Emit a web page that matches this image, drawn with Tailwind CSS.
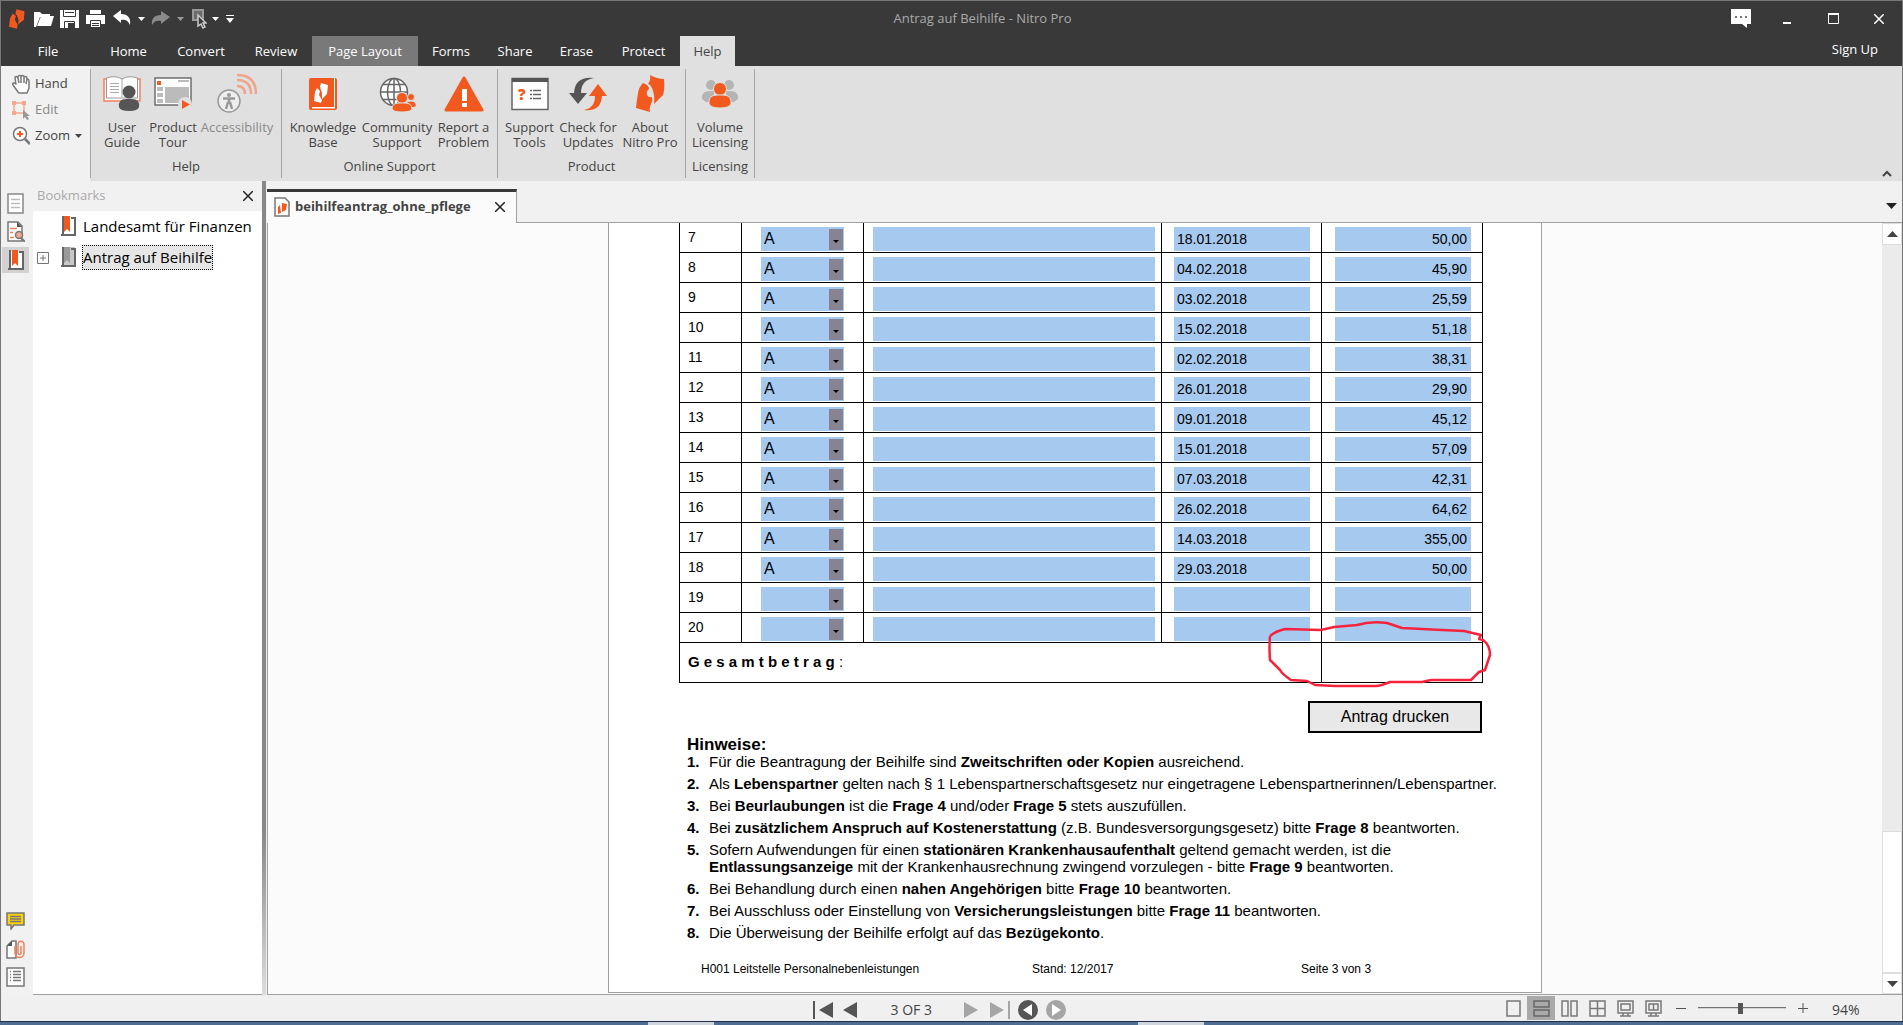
<!DOCTYPE html>
<html lang="de">
  <head>
    <meta charset="UTF-8" />
    <meta name="viewport" content="width=device-width, initial-scale=1.0" />
    <title>Antrag auf Beihilfe - Nitro Pro</title>
    <script src="https://cdn.jsdelivr.net/npm/@tailwindcss/browser@4"></script>
  </head>
  <body class="flex h-screen flex-col overflow-hidden bg-[#f0f0f0] font-['Open_Sans','Noto_Sans',sans-serif] text-[13px] text-[#444]">
    <div class="flex min-h-0 flex-1 flex-col border-t border-r border-l border-[#777]">
      <!-- Title bar -->
      <header class="bg-[#39393a] text-white">
        <div class="flex h-[35px] items-center">
          <div class="flex items-center pl-2">
            <svg class="mr-[9px] h-5 w-4" viewBox="5 2 30 37" fill="#f1591f"><path d="M19 2 34 6 33 22 22 31 23 22 20 14 17 11zM12 10 18 15 16 22 21 31 20 39 5 35 7 19z" /></svg>
            <button type="button" aria-label="Open" class="mr-[6px]">
              <svg class="h-5 w-5" viewBox="0 0 20 20" fill="#fff"><path d="M0 3h6l2 2h8v3H6L2 18H0zM7 7h13l-3 10H3z" /></svg>
            </button>
            <button type="button" aria-label="Save" class="mr-[7px]">
              <svg class="h-5 w-[19px]" viewBox="0 0 19 20"><path fill="#fff" d="M0 1h19v18H0z" /><path fill="none" stroke="#39393a" d="M3.500 1v6.500h12V1M5 3.500h9M4.500 19v-6.500h10V19" /><path fill="#39393a" d="M8 14h6v5H8z" /></svg>
            </button>
            <button type="button" aria-label="Print" class="mr-2">
              <svg class="h-5 w-[19px]" viewBox="0 0 19 20"><path fill="#fff" d="M4 1h11v4H4zM0 6h19v9H0z" /><path fill="#fff" stroke="#39393a" d="M4.500 11.500h10v7h-10z" /><path stroke="#39393a" d="M6 14.500h7M6 16.500h7" /></svg>
            </button>
            <button type="button" aria-label="Undo" class="mr-[7px]">
              <svg class="h-5 w-[18px]" viewBox="0 0 18 20" fill="#fff"><path d="M0 7 8 1v4c7 0 10 4 9 11-2-5-5-6-9-5v3z" /></svg>
            </button>
            <svg class="mr-[6px] h-1 w-[7px]" viewBox="0 0 7 4" fill="#fff"><path d="M0 0h7L3.500 4z" /></svg>
            <button type="button" aria-label="Redo" class="mr-[7px]">
              <svg class="h-5 w-[19px]" viewBox="0 0 19 20" fill="#8a8a8a"><path d="M19 8 10 2v4C3 6 0 10 1 16c2-4 5-5 9-4v3z" /></svg>
            </button>
            <svg class="mr-2 h-1 w-[7px]" viewBox="0 0 7 4" fill="#999"><path d="M0 0h7L3.500 4z" /></svg>
            <button type="button" aria-label="Select" class="mr-[5px]">
              <svg class="h-5 w-[15px]" viewBox="0 0 15 20"><path fill="#6b6b6b" stroke="#999" stroke-width="2" d="M1 1h10v10H1z" /><path fill="#39393a" stroke="#ccc" stroke-width="1.500" d="M6 6v11l3-2 2 4 2-1-2-4h3z" /></svg>
            </button>
            <svg class="mr-[7px] h-1 w-[7px]" viewBox="0 0 7 4" fill="#fff"><path d="M0 0h7L3.500 4z" /></svg>
            <svg class="h-2 w-2" viewBox="0 0 8 8" fill="#fff"><path d="M0 0h8v1H0zM0 3h8L4 8z" /></svg>
          </div>
          <h1 class="flex-1 text-center text-[#a9a9a9]">Antrag auf Beihilfe - Nitro Pro</h1>
          <div class="flex items-center pr-[18px]">
            <button type="button" aria-label="Feedback" class="mr-8">
              <svg class="h-5 w-5" viewBox="0 0 20 20"><path fill="#fff" d="M0 0h20v15h-4v4l-5-4H0z" /><path fill="#777" d="M4 7h2v2H4zM9 7h2v2H9zM14 7h2v2h-2z" /></svg>
            </button>
            <button type="button" aria-label="Minimize" class="mr-[37px]">
              <svg class="h-3 w-2" viewBox="0 0 8 12"><path fill="#fff" d="M0 9h8v2H0z" /></svg>
            </button>
            <button type="button" aria-label="Maximize" class="mr-[35px]">
              <svg class="h-[11px] w-[11px]" viewBox="0 0 11 11"><path fill="none" stroke="#fff" d="M.500 1h10v9.500H.500z" /><path fill="#fff" d="M0 0h11v2H0z" /></svg>
            </button>
            <button type="button" aria-label="Close">
              <svg class="h-[10px] w-[10px]" viewBox="0 0 10 10"><path stroke="#fff" stroke-width="1.500" d="m0 0 10 10M10 0 0 10" /></svg>
            </button>
          </div>
        </div>
        <nav class="flex h-[30px] items-stretch">
          <button type="button" class="w-[94px] pt-[2px]">File</button>
          <button type="button" class="w-[67px] pt-[2px]">Home</button>
          <button type="button" class="w-[78px] pt-[2px]">Convert</button>
          <button type="button" class="w-[72px] pt-[2px]">Review</button>
          <button type="button" class="w-[106px] bg-[#79797a] pt-[2px]">Page Layout</button>
          <button type="button" class="w-[66px] pt-[2px]">Forms</button>
          <button type="button" class="w-[62px] pt-[2px]">Share</button>
          <button type="button" class="w-[61px] pt-[2px]">Erase</button>
          <button type="button" class="w-[73px] pt-[2px]">Protect</button>
          <button type="button" class="w-[55px] bg-[#e0e0e0] pt-[2px] text-[#444]">Help</button>
          <a href="#" class="ml-auto pt-1 pr-6">Sign Up</a>
        </nav>
      </header>

      <!-- Ribbon -->
      <section class="flex h-[115px] bg-[#e0e0e0]">
        <div class="flex w-[89px] flex-col bg-[#f1f1f1] pt-[5px] pl-[11px]">
          <button type="button" class="flex h-[26px] items-center gap-[5px]">
            <svg class="h-5 w-[18px]" viewBox="0 0 18 20" fill="#fff" stroke="#777" stroke-width="1.500" stroke-linejoin="round"><path d="M6 18 1 11c-1-2 1-3 3-1L3 4c0-2 2-2 3 0V3c0-2 3-2 3-.500C10 1 12 1 12 3c2-1 3 0 3 2 2 0 2 1 2 3v6l-2 5H7zM6 4l1 5M9 3v6M12 3v6M15 5l-1 5" /></svg>
            Hand
          </button>
          <button type="button" class="flex h-[26px] items-center gap-[5px] text-[#888]">
            <svg class="h-5 w-[18px]" viewBox="0 0 18 20"><path fill="none" stroke="#f3a88e" stroke-width="1.500" d="M2 3h10v10H2z" /><path fill="#f3a88e" d="M0 1h4v4H0zM10 1h4v4h-4zM0 11h4v4H0z" /><path fill="#999" d="M11 10v9l2-2 2 3 2-1-2-3h3z" /></svg>
            Edit
          </button>
          <button type="button" class="flex h-[26px] items-center gap-[5px]">
            <svg class="h-5 w-[18px]" viewBox="0 0 18 20"><circle cx="8" cy="8" r="6.500" fill="#fff" stroke="#777" stroke-width="1.500" /><path stroke="#777" stroke-width="2.500" d="m13 13 5 5" /><path stroke="#f1591f" stroke-width="2" d="M8 5v6M5 8h6" /></svg>
            Zoom
            <svg class="h-1 w-[7px]" viewBox="0 0 7 4" fill="#444"><path d="M0 0h7L3.500 4z" /></svg>
          </button>
        </div>

        <div class="my-[3px] flex flex-col border-r border-l border-[#a5a5a5] px-[6px] pt-1 text-center leading-[15px]">
          <div class="flex h-[83px]">
            <button type="button" class="flex w-[50px] flex-col items-center">
              <svg class="mb-[7px] h-10 w-10 shrink-0" viewBox="0 0 40 40"><path fill="#fff" stroke="#f0835c" stroke-width="1.500" d="M2 6h36v22H2z" /><path fill="#fff" stroke="#999" d="M4.500 5q9-3 15.500 1 6.500-4 15.500-1v20H4.500z" /><path stroke="#aaa" d="M20 6v18M8 10.500h9M8 13.500h9M8 16.500h9M8 19.500h9" /><circle cx="27" cy="19" r="6.500" fill="#555" /><path fill="#555" d="M17 34q-1-8 7-8h6q8 0 7 8-1 4-10 4t-10-4" /></svg>
              User Guide
            </button>
            <button type="button" class="flex w-[52px] flex-col items-center">
              <svg class="mb-[7px] h-10 w-10 shrink-0" viewBox="0 0 40 40"><path fill="#fff" stroke="#6d6d6d" stroke-width="1.500" d="M2 5h36v27H2z" /><path fill="#f1591f" d="M4 8h4v4H4z" /><path stroke="#bbb" stroke-width="2" d="M25 8h11" /><path fill="#bbb" d="M4 14h6v4H4zM4 20h6v4H4zM4 26h6v4H4zM12 14h24v16H12z" /><circle cx="32" cy="31" r="7" fill="#e0e0e0" /><path fill="#f1591f" d="m29 27 8 4.500-8 4.500z" /></svg>
              Product Tour
            </button>
            <button type="button" class="flex w-[76px] flex-col items-center text-[#8b8b8b]">
              <svg class="mb-[7px] h-10 w-10 shrink-0" viewBox="0 0 40 40" fill="none"><circle cx="12" cy="28" r="11" fill="#eee" stroke="#999" stroke-width="1.500" /><circle cx="12" cy="22" r="2" fill="#999" /><path stroke="#999" stroke-width="2.500" d="M6 25.500h12M12 25v6M11 29l-2 7M13 29l2 7" /><path stroke="#efa58b" stroke-width="2.500" d="M20 13q8 0 8 8M20 7q14 0 14 14M20 2q19 0 19 19" /></svg>
              Accessibility
            </button>
          </div>
          <span class="mt-[3px]">Help</span>
        </div>

        <div class="my-[3px] flex flex-col border-r border-[#a5a5a5] px-[5px] pt-1 text-center leading-[15px]">
          <div class="flex h-[83px]">
            <button type="button" class="flex w-[72px] flex-col items-center">
              <svg class="mb-[7px] h-10 w-10 shrink-0" viewBox="0 0 40 40"><rect x="6" y="5" width="28" height="32" rx="2" fill="#f1591f" /><path fill="#fff" d="M31 5h1v29h-1zM9 34h23v1.500H9z" /><path fill="#fff" d="m18 10 7 2-1 9-5 5 0-6-2-6zM14 15l3 3-1 4 3 5-1 3-7-2 1-9z" /></svg>
              Knowledge Base
            </button>
            <button type="button" class="flex w-[76px] flex-col items-center">
              <svg class="mb-[7px] h-10 w-10 shrink-0" viewBox="0 0 40 40"><g fill="#fff" stroke="#666" stroke-width="1.500"><circle cx="17" cy="19" r="13.500" /><ellipse cx="17" cy="19" rx="6.500" ry="13.500" /><path d="M17 5.500v27M3.500 19h27M6 11.500h22M6 26.500h22" /></g><g fill="#f1591f" stroke="#e0e0e0"><circle cx="34" cy="24" r="3.500" /><path d="M29 32q0-4 5-4 6 0 5 6l-7 1z" /><circle cx="25" cy="25" r="5.500" /><path d="M15 36q0-6 7-6h6q7 0 7 6-1 3-10 3t-10-3" /></g></svg>
              Community Support
            </button>
            <button type="button" class="flex w-[57px] flex-col items-center">
              <svg class="mb-[7px] h-10 w-10 shrink-0" viewBox="0 0 40 40"><path fill="#f1591f" stroke="#f1591f" stroke-width="3" stroke-linejoin="round" d="M20 5 38 37H2z" /><path fill="#fff" d="M18 16h5v12h-5zM18 30h5v4h-5z" /></svg>
              <span class="whitespace-nowrap">Report a<br />Problem</span>
            </button>
          </div>
          <span class="mt-[3px]">Online Support</span>
        </div>

        <div class="my-[3px] flex flex-col border-r border-[#a5a5a5] px-[6px] pt-1 text-center leading-[15px]">
          <div class="flex h-[83px]">
            <button type="button" class="flex w-[51px] flex-col items-center">
              <svg class="mb-[7px] h-10 w-10 shrink-0" viewBox="0 0 40 40"><path fill="#fff" stroke="#666" stroke-width="1.500" d="M2 5.500h36v31H2z" /><path fill="#555" d="M2 5h36v4H2z" /><text x="8" y="27" fill="#f1591f" font-size="15" font-weight="800">?</text><path stroke="#666" stroke-width="1.500" d="M20 17.500h2M20 21.500h2M20 25.500h2M23 17.500h8M23 21.500h8M23 25.500h8" /></svg>
              Support Tools
            </button>
            <button type="button" class="flex w-[66px] flex-col items-center">
              <svg class="mb-[7px] h-10 w-10 shrink-0" viewBox="0 0 40 40"><path fill="#555" d="M26 5Q7 3 6 20H1l9 11 9-11h-6Q13 7 26 5" /><path fill="#f1591f" d="M16 37q17 2 18-14h5L30 11l-9 12h6q0 12-11 14" /></svg>
              Check for Updates
            </button>
            <button type="button" class="flex w-[58px] flex-col items-center">
              <svg class="mb-[7px] h-10 w-10 shrink-0" viewBox="0 0 40 40" fill="#f1591f"><path d="M20 2Q27 6 34 6 35 16 33 22L24 31Q25 22 22 15 20 11 18 11 21 7 20 2M13 10Q19 12 19 16 16 18 17 22 19 25 22 24 23 28 21 31 19 36 20 39L6 35Q7 26 8 20 9 14 13 10" /></svg>
              <span class="whitespace-nowrap">About<br />Nitro Pro</span>
            </button>
          </div>
          <span class="mt-[3px]">Product</span>
        </div>

        <div class="my-[3px] flex flex-col border-r border-[#a5a5a5] px-[5px] pt-1 text-center leading-[15px]">
          <div class="flex h-[83px]">
            <button type="button" class="flex w-[58px] flex-col items-center">
              <svg class="mb-[7px] h-10 w-10 shrink-0" viewBox="0 0 40 40"><g fill="#b5b5b5"><circle cx="11" cy="12" r="5" /><circle cx="29" cy="12" r="5" /><path d="M2 26q-1-8 8-8h4v11H6zM38 26q1-8-8-8h-4v11h8z" /></g><g fill="#f1591f" stroke="#e0e0e0"><circle cx="20" cy="16" r="6.500" /><path d="M9 31q-1-9 8-9h6q9 0 8 9-2 4-11 4T9 31" /></g></svg>
              Volume Licensing
            </button>
          </div>
          <span class="mt-[3px]">Licensing</span>
        </div>
        <button type="button" aria-label="Collapse ribbon" class="mt-auto mr-[10px] mb-1 ml-auto">
          <svg class="h-[7px] w-[10px]" viewBox="0 0 10 7"><path fill="none" stroke="#444" stroke-width="2" d="m1 6 4-4 4 4" /></svg>
        </button>
      </section>

      <main class="flex min-h-0 flex-1">
        <!-- Panel switcher -->
        <nav class="flex w-8 flex-col bg-[#f1f1f1] pt-[10px] pl-px">
          <button type="button" aria-label="Pages" class="flex h-7 w-[27px] justify-center pt-[2px]">
            <svg class="h-[21px] w-[17px]" viewBox="0 0 17 21"><path fill="#fff" stroke="#888" stroke-width="1.500" d="M1 1h15v19H1z" /><path stroke="#bbb" stroke-width="1.500" d="M4 6.500h9M4 10.500h9M4 14.500h9" /></svg>
          </button>
          <button type="button" aria-label="Search" class="flex h-7 w-[27px] justify-center pt-[2px]">
            <svg class="h-[21px] w-[18px]" viewBox="0 0 18 21"><path fill="#fff" stroke="#777" stroke-width="1.500" d="M1 1h10l4 4v15H1z" /><path fill="#555" d="M10 1v5h5z" /><path stroke="#f0835c" stroke-width="1.500" d="M3 7.500h7M3 11.500h3M3 16.500h4" /><circle cx="12" cy="14" r="3.500" fill="#f3a88e" stroke="#777" stroke-width="1.500" /><path stroke="#777" stroke-width="2" d="m14 17 4 4" /></svg>
          </button>
          <button type="button" aria-label="Bookmarks" class="flex h-[26px] w-[27px] items-center justify-center bg-[#d2d2d2]">
            <svg class="h-[21px] w-4" viewBox="0 0 16 21"><path fill="#fff" d="M1 1h14v19H1z" /><path fill="#f1591f" d="M4 0h6v16l-3-3-3 3z" /><path fill="none" stroke="#666" stroke-width="2" d="M2 0v20M0 19h15V2h-4" /></svg>
          </button>
          <button type="button" aria-label="Comments" class="mt-auto h-7 w-[27px] pl-1">
            <svg class="h-[18px] w-[19px]" viewBox="0 0 19 18"><path fill="#fbd20c" stroke="#777" stroke-width="1.500" d="M1 1h17v12H8l-3 4v-4H1z" /><path stroke="#777" stroke-width="1.500" d="M4 4.500h11M4 7h11M4 9.500h11" /></svg>
          </button>
          <button type="button" aria-label="Attachments" class="h-7 w-[27px] pl-1">
            <svg class="h-[19px] w-[19px]" viewBox="0 0 19 19" fill="none"><path fill="#fff" stroke="#777" stroke-width="1.500" d="M1 6 6 1h4v17H1z" /><path fill="#555" d="M1 6 6 1v5z" /><path stroke="#f0835c" stroke-width="1.500" d="M9 6v7c0 6 9 6 9 0V5c0-5-6-5-6 0v8c0 2 3 2 3 0V6" /></svg>
          </button>
          <button type="button" aria-label="Output" class="mt-1 mb-2 h-5 w-[27px] pl-1">
            <svg class="h-5 w-[19px]" viewBox="0 0 19 20"><path fill="#fff" stroke="#777" stroke-width="1.500" d="M1 1h17v18H1z" /><path stroke="#777" d="M4 4.500h1M4 7.500h1M4 10.500h1M4 13.500h1M7 4.500h8M7 7.500h8M7 10.500h8M7 13.500h8" stroke-width="1.500" /></svg>
          </button>
        </nav>

        <!-- Bookmarks panel -->
        <aside class="flex w-[229px] flex-col border-b border-[#a0a0a0] bg-white">
          <div class="flex h-[30px] items-center justify-between bg-[#f1f1f1] pr-[9px] pl-1">
            <h2 class="text-[#a9a9a9]">Bookmarks</h2>
            <button type="button" aria-label="Close panel">
              <svg class="h-[10px] w-[10px]" viewBox="0 0 10 10"><path stroke="#222" stroke-width="1.500" d="m0 0 10 10M10 0 0 10" /></svg>
            </button>
          </div>
          <ul class="text-[15px] text-black">
            <li class="flex h-[31px] items-center pl-7">
              <svg class="mr-[5px] h-[21px] w-4" viewBox="0 0 16 21"><path fill="#f1591f" d="M3 0h6v16l-3-3-3 3z" /><path fill="none" stroke="#666" stroke-width="2" d="M2 0v20M0 19h14V2h-4" /></svg>
              <a href="#" class="px-px">Landesamt für Finanzen</a>
            </li>
            <li class="flex h-[31px] items-center pl-1">
              <button type="button" aria-label="Expand" class="mr-3">
                <svg class="h-3 w-3" viewBox="0 0 12 12"><path fill="#fff" stroke="#777" d="M.500.500h11v11H.500zM3 6h6M6 3v6" /></svg>
              </button>
              <svg class="mr-[5px] h-[21px] w-4" viewBox="0 0 16 21"><path fill="#c8c8c8" d="M1 0h13v20H1z" /><path fill="#999" d="M3 0h6v16l-3-3-3 3z" /><path fill="none" stroke="#666" stroke-width="2" d="M2 0v20M0 19h14V2h-4" /></svg>
              <a href="#" class="h-[25px] border border-dotted border-black bg-[#e6e6e6] leading-[23px]">Antrag auf Beihilfe</a>
            </li>
          </ul>
        </aside>
        <div class="w-1 bg-linear-to-b from-[#888] from-80% to-[#ddd]"></div>

        <!-- Document -->
        <section class="flex min-w-0 flex-1 flex-col pl-px">
          <div class="flex h-[42px] items-end bg-[#f1f1f1]">
            <div class="flex h-[34px] w-[250px] items-center border-t-3 border-r border-t-[#39393a] border-r-[#a0a0a0] bg-[#fbfbfb] pb-[2px] pl-[7px]">
              <svg class="mr-[5px] h-5 w-4 shrink-0" viewBox="0 0 16 20"><path fill="#fff" stroke="#777" stroke-width="1.500" d="M1 1h10l4 4v14H1z" /><path fill="#f1591f" d="m8 6 5 1-1 6-4 2zM6 8l1 8-3 1 0-7z" /></svg>
              <span class="font-bold">beihilfeantrag_ohne_pflege</span>
              <button type="button" aria-label="Close tab" class="mr-[11px] ml-auto">
                <svg class="h-[10px] w-[10px]" viewBox="0 0 10 10"><path stroke="#222" stroke-width="1.500" d="m0 0 10 10M10 0 0 10" /></svg>
              </button>
            </div>
            <div class="flex h-[34px] flex-1 items-center justify-end border-b border-[#a0a0a0] pr-[5px]">
              <button type="button" aria-label="Tab list">
                <svg class="h-[6px] w-[11px]" viewBox="0 0 11 6" fill="#222"><path d="M0 0h11L5.500 6z" /></svg>
              </button>
            </div>
          </div>

          <div class="flex min-h-0 flex-1 border-b border-l border-[#a0a0a0] bg-[#fbfbfb]">
            <div class="flex min-w-0 flex-1 justify-center overflow-hidden pb-px">
              <article class="w-[934px] shrink-0 border-r border-b border-l border-[#a0a0a0] bg-white px-[70px] font-['Liberation_Sans',Arial,sans-serif] text-black">
                <div class="relative w-[804px]">
                  <table class="w-full table-fixed border-separate border-spacing-0 border-l border-black text-[14px]">
                    <colgroup>
                      <col class="w-[62px]" />
                      <col class="w-[122px]" />
                      <col class="w-[298px]" />
                      <col class="w-[160px]" />
                      <col class="w-[161px]" />
                    </colgroup>
                    <tbody id="rows"></tbody>
                    <tfoot>
                      <tr>
                        <th colspan="4" scope="row" class="h-10 border-r border-b border-black pl-2 text-left text-[15px] font-bold">G e s a m t b e t r a g <span class="font-normal">:</span></th>
                        <td class="border-r border-b border-black"></td>
                      </tr>
                    </tfoot>
                  </table>
                  <!-- Freehand mark round the total -->
                  <svg class="absolute -right-[11px] -bottom-[6px] h-[70px] w-[228px]" viewBox="1266 619 228 70" fill="none" stroke="#f5243c" stroke-width="2.500" stroke-linejoin="round"><path d="M1270 636Q1276 631 1285 629L1321 630 1334 627 1357 625Q1370 621 1387 623L1402 628 1442 630 1464 631 1481 635 1479 639 1483 640Q1490 645 1490 655L1485 670 1479 672 1471 680 1431 680 1422 682 1390 682Q1380 686 1376 686L1335 686 1315 685 1307 681 1291 680Q1282 674 1280 670L1270 660Q1269 648 1270 636" /></svg>
                </div>
                <div class="mt-[18px] flex w-[803px] justify-end">
                  <button type="button" class="h-8 w-[174px] border-2 border-black bg-[#e8e8e8] text-[16px]">Antrag drucken</button>
                </div>
                <h2 class="mt-[3px] pl-2 text-[17px] leading-[17px] font-bold">Hinweise:</h2>
                <ol class="flex flex-col gap-[5px] pl-2 text-[15px] leading-[17px] whitespace-nowrap">
                  <li class="flex"><b class="w-[22px] shrink-0">1.</b><p>Für die Beantragung der Beihilfe sind <b>Zweitschriften oder Kopien</b> ausreichend.</p></li>
                  <li class="flex"><b class="w-[22px] shrink-0">2.</b><p>Als <b>Lebenspartner</b> gelten nach § 1 Lebenspartnerschaftsgesetz nur eingetragene Lebenspartnerinnen/Lebenspartner.</p></li>
                  <li class="flex"><b class="w-[22px] shrink-0">3.</b><p>Bei <b>Beurlaubungen</b> ist die <b>Frage 4</b> und/oder <b>Frage 5</b> stets auszufüllen.</p></li>
                  <li class="flex"><b class="w-[22px] shrink-0">4.</b><p>Bei <b>zusätzlichem Anspruch auf Kostenerstattung</b> (z.B. Bundesversorgungsgesetz) bitte <b>Frage 8</b> beantworten.</p></li>
                  <li class="flex"><b class="w-[22px] shrink-0">5.</b><p>Sofern Aufwendungen für einen <b>stationären Krankenhausaufenthalt</b> geltend gemacht werden, ist die<br /><b>Entlassungsanzeige</b> mit der Krankenhausrechnung zwingend vorzulegen - bitte <b>Frage 9</b> beantworten.</p></li>
                  <li class="flex"><b class="w-[22px] shrink-0">6.</b><p>Bei Behandlung durch einen <b>nahen Angehörigen</b> bitte <b>Frage 10</b> beantworten.</p></li>
                  <li class="flex"><b class="w-[22px] shrink-0">7.</b><p>Bei Ausschluss oder Einstellung von <b>Versicherungsleistungen</b> bitte <b>Frage 11</b> beantworten.</p></li>
                  <li class="flex"><b class="w-[22px] shrink-0">8.</b><p>Die Überweisung der Beihilfe erfolgt auf das <b>Bezügekonto</b>.</p></li>
                </ol>
                <footer class="mt-5 flex pl-[22px] text-[12px] leading-4">
                  <span class="w-[331px]">H001 Leitstelle Personalnebenleistungen</span>
                  <span class="w-[269px]">Stand: 12/2017</span>
                  <span>Seite 3 von 3</span>
                </footer>
              </article>
            </div>
            <!-- Scrollbar -->
            <div class="flex w-5 flex-col bg-[#ebebeb]">
              <button type="button" aria-label="Scroll up" class="flex h-[22px] items-center justify-center border border-[#ddd] bg-white">
                <svg class="h-[6px] w-[11px]" viewBox="0 0 11 6" fill="#444"><path d="M0 6h11L5.500 0z" /></svg>
              </button>
              <div class="mt-auto h-[142px] border border-[#ddd] bg-white"></div>
              <button type="button" aria-label="Scroll down" class="flex h-[21px] items-center justify-center border border-[#ddd] bg-white">
                <svg class="h-[6px] w-[11px]" viewBox="0 0 11 6" fill="#444"><path d="M0 0h11L5.500 6z" /></svg>
              </button>
            </div>
          </div>
        </section>
      </main>

      <!-- Status bar -->
      <footer class="flex h-[26px] items-center">
        <div class="flex-1"></div>
        <div class="flex items-center pt-1 pr-[25px]">
          <button type="button" aria-label="First page" class="mr-[10px]"><svg class="h-[18px] w-5" viewBox="0 0 20 18" fill="#555"><path d="M0 0h2v18H0zM20 1v16L6 9z" /></svg></button>
          <button type="button" aria-label="Previous page" class="mr-[34px]"><svg class="h-[18px] w-[14px]" viewBox="0 0 14 18" fill="#555"><path d="M14 1v16L0 9z" /></svg></button>
          <span class="w-[73px] text-[14px] leading-[18px]">3 OF 3</span>
          <button type="button" aria-label="Next page" class="mr-3"><svg class="h-[18px] w-[14px]" viewBox="0 0 14 18" fill="#a5a5a5"><path d="M0 1v16l14-8z" /></svg></button>
          <button type="button" aria-label="Last page" class="mr-2"><svg class="h-[18px] w-5" viewBox="0 0 20 18" fill="#a5a5a5"><path d="M0 1v16l14-8zM18 0h2v18h-2z" /></svg></button>
          <button type="button" aria-label="Previous view" class="mr-2"><svg class="h-5 w-5" viewBox="0 0 20 20"><circle cx="10" cy="10" r="10" fill="#555" /><path fill="#fff" d="M14 4v12l-9-6z" /></svg></button>
          <button type="button" aria-label="Next view"><svg class="h-5 w-5" viewBox="0 0 20 20"><circle cx="10" cy="10" r="10" fill="#a5a5a5" /><path fill="#fff" d="M6 4v12l9-6z" /></svg></button>
        </div>
        <div class="flex flex-1 items-center justify-end">
          <button type="button" aria-label="Single page" class="flex h-6 w-7 items-center justify-center"><svg class="h-[17px] w-[15px]" viewBox="0 0 15 17"><path fill="none" stroke="#777" stroke-width="1.500" d="M1 1h13v15H1z" /></svg></button>
          <button type="button" aria-label="Continuous" class="flex h-6 w-7 items-center justify-center bg-[#a9a9a9]"><svg class="h-[17px] w-[17px]" viewBox="0 0 17 17"><path fill="none" stroke="#666" stroke-width="1.500" d="M1 1h15v6H1zM1 10h15v6H1z" /></svg></button>
          <button type="button" aria-label="Facing" class="flex h-6 w-7 items-center justify-center"><svg class="h-[17px] w-[17px]" viewBox="0 0 17 17"><path fill="none" stroke="#777" stroke-width="1.500" d="M1 1h6v15H1zM10 1h6v15h-6z" /></svg></button>
          <button type="button" aria-label="Facing continuous" class="flex h-6 w-7 items-center justify-center"><svg class="h-[17px] w-[17px]" viewBox="0 0 17 17"><path fill="none" stroke="#777" stroke-width="1.500" d="M1 1h15v15H1zM8.500 1v15M1 8.500h15" /></svg></button>
          <button type="button" aria-label="Full screen" class="flex h-6 w-7 items-center justify-center"><svg class="h-[17px] w-[17px]" viewBox="0 0 17 17"><path fill="none" stroke="#777" stroke-width="1.500" d="M1 1h15v12H1zM4 4h9v6H4zM6 13v3M11 13v3M3 16h11" /></svg></button>
          <button type="button" aria-label="Full screen facing" class="flex h-6 w-7 items-center justify-center"><svg class="h-[17px] w-[17px]" viewBox="0 0 17 17"><path fill="none" stroke="#777" stroke-width="1.500" d="M1 1h15v12H1zM4 4h9v6H4zM8.500 4v6M6 13v3M11 13v3M3 16h11" /></svg></button>
          <button type="button" aria-label="Zoom out" class="mr-3 ml-[9px]"><svg class="h-[10px] w-[10px]" viewBox="0 0 10 10"><path stroke="#555" d="M0 5.500h10" /></svg></button>
          <input type="range" aria-label="Zoom" min="0" max="100" value="48" class="h-4 w-[88px] appearance-none bg-linear-to-b from-transparent from-45% via-[#555] via-45% to-transparent to-55% [&::-webkit-slider-thumb]:h-[11px] [&::-webkit-slider-thumb]:w-[5px] [&::-webkit-slider-thumb]:appearance-none [&::-webkit-slider-thumb]:bg-[#555]" />
          <button type="button" aria-label="Zoom in" class="mr-6 ml-3"><svg class="h-[10px] w-[10px]" viewBox="0 0 10 10"><path stroke="#555" d="M0 5.500h10M5 0v10" /></svg></button>
          <span class="w-[70px] pt-1 text-[14px] leading-[18px]">94%</span>
        </div>
      </footer>
    </div>
    <!-- Desktop taskbar edge -->
    <div class="flex h-1 justify-center gap-[424px] border-t border-[#1f2f4c] bg-[#4f6d91] pr-[52px]">
      <div class="w-[66px] bg-[#cfd6de]"></div>
      <div class="w-[66px] bg-[#cfd6de]"></div>
    </div>

    <script>
      const rows = [
        [7, "A", "18.01.2018", "50,00"],
        [8, "A", "04.02.2018", "45,90"],
        [9, "A", "03.02.2018", "25,59"],
        [10, "A", "15.02.2018", "51,18"],
        [11, "A", "02.02.2018", "38,31"],
        [12, "A", "26.01.2018", "29,90"],
        [13, "A", "09.01.2018", "45,12"],
        [14, "A", "15.01.2018", "57,09"],
        [15, "A", "07.03.2018", "42,31"],
        [16, "A", "26.02.2018", "64,62"],
        [17, "A", "14.03.2018", "355,00"],
        [18, "A", "29.03.2018", "50,00"],
        [19, "", "", ""],
        [20, "", "", ""],
      ];

      document.getElementById("rows").innerHTML = rows
        .map(
          ([nr, person, date, amount]) => `
            <tr>
              <th scope="row" class="h-[30px] border-r border-b border-black pl-2 text-left font-normal">${nr}</th>
              <td class="border-r border-b border-black pt-1 pb-px pl-[19px]">
                <div class="relative h-6 w-[83px]">
                  <select aria-label="Person ${nr}" class="block h-6 w-full appearance-none bg-[#a6c9f0] pl-[3px] text-[16px] leading-6">
                    <option>${person}</option>
                  </select>
                  <svg class="pointer-events-none absolute top-[2px] right-px h-[21px] w-[14px] bg-[#888392]" viewBox="0 0 14 21"><path d="M4 11h6l-3 3z" /></svg>
                </div>
              </td>
              <td class="border-r border-b border-black pt-1 pb-px pl-[9px]">
                <input type="text" aria-label="Art ${nr}" class="block h-6 w-[282px] bg-[#a6c9f0] px-[3px]" />
              </td>
              <td class="border-r border-b border-black pt-1 pb-px pl-3">
                <input type="text" aria-label="Datum ${nr}" value="${date}" class="block h-6 w-[136px] bg-[#a6c9f0] px-[3px]" />
              </td>
              <td class="border-r border-b border-black pt-1 pb-px pl-[13px]">
                <input type="text" aria-label="Betrag ${nr}" value="${amount}" class="block h-6 w-[136px] bg-[#a6c9f0] pr-1 text-right" />
              </td>
            </tr>`
        )
        .join("");
    </script>
  </body>
</html>
